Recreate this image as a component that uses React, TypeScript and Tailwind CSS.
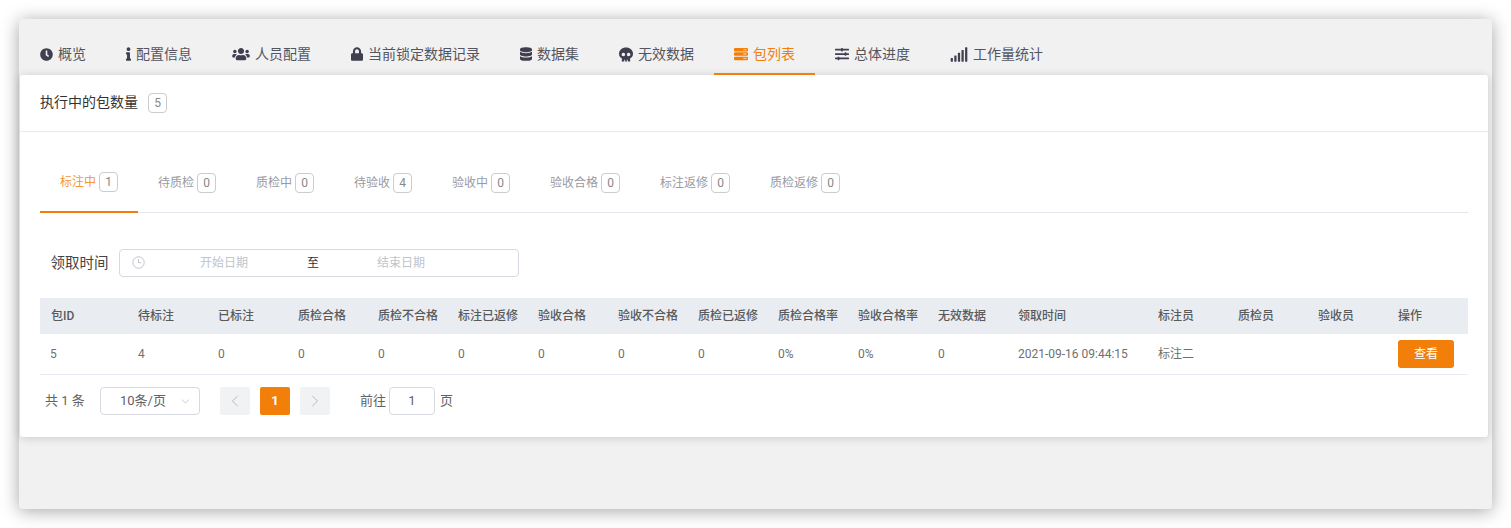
import React from "react";
import { FaClock, FaInfo, FaUsers, FaLock, FaDatabase, FaSkull, FaServer, FaSlidersH, FaSignal } from "react-icons/fa";
import { ChevronDown, ChevronLeft, ChevronRight } from "lucide-react";

const font = { fontFamily: 'Roboto, "Noto Sans CJK SC", sans-serif' };

const topTabs = [
  { label: "概览", icon: <FaClock className="h-[13px] w-[13px]" /> },
  { label: "配置信息", icon: <FaInfo className="h-[14px] w-[5px]" /> },
  { label: "人员配置", icon: <FaUsers className="h-[14px] w-[18px]" /> },
  { label: "当前锁定数据记录", icon: <FaLock className="h-[14px] w-[12px]" /> },
  { label: "数据集", icon: <FaDatabase className="h-[14px] w-[12px]" /> },
  { label: "无效数据", icon: <FaSkull className="h-[15px] w-[14px]" /> },
  { label: "包列表", icon: <FaServer className="h-[14px] w-[14px]" />, active: true },
  { label: "总体进度", icon: <FaSlidersH className="h-[14px] w-[14px]" /> },
  { label: "工作量统计", icon: <FaSignal className="h-[15px] w-[18px]" /> },
];

const subTabs = [
  ["标注中", "1"],
  ["待质检", "0"],
  ["质检中", "0"],
  ["待验收", "4"],
  ["验收中", "0"],
  ["验收合格", "0"],
  ["标注返修", "0"],
  ["质检返修", "0"],
];

const headers = ["包ID", "待标注", "已标注", "质检合格", "质检不合格", "标注已返修", "验收合格", "验收不合格", "质检已返修", "质检合格率", "验收合格率", "无效数据", "领取时间", "标注员", "质检员", "验收员", "操作"];
const row = ["5", "4", "0", "0", "0", "0", "0", "0", "0", "0%", "0%", "0", "2021-09-16 09:44:15", "标注二", "", ""];

export default function App() {
  return (
    <div className="min-h-[528px] bg-white pt-[19px] pl-[19px] pr-[19px]" style={font}>
      <div className="h-[490px] w-[1473px] rounded-[4px] bg-[#f1f1f1] pl-px shadow-[0_2px_18px_rgba(0,0,0,0.36)]">
        <div className="flex h-[56px] items-end">
          {topTabs.map((t) => (
            <div
              key={t.label}
              className={`flex h-[40px] items-center gap-[5px] border-b-2 px-[20px] text-[14px] ${t.active ? "border-[#f17f0a] text-[#f17f0a]" : "border-transparent text-[#55555f]"}`}
            >
              <span className={t.active ? "text-[#f17f0a]" : "text-[#3f3f50]"}>{t.icon}</span>
              <span>{t.label}</span>
            </div>
          ))}
        </div>
        <div className="h-[362px] w-[1468px] rounded-[3px] bg-white shadow-[0_1px_10px_rgba(0,0,0,0.16)]">
          <div className="flex h-[57px] items-center gap-[10px] border-b border-[#e8eaf0] pl-[20px]">
            <span className="pb-[2px] text-[14px] text-[#333333]">执行中的包数量</span>
            <span className="flex h-[20px] w-[19px] items-center justify-center rounded-[4px] border border-[#cccccc] text-[12px] text-[#888888]">5</span>
          </div>
          <div className="px-[20px]">
            <div className="flex h-[81px] border-b border-[#e4e7ed]">
              {subTabs.map(([label, n], i) => (
                <div
                  key={label}
                  className={`-mb-px flex items-center gap-[3px] px-[20px] pt-[21px] text-[12px] ${i === 0 ? "border-b-2 border-[#f17f0a] text-[#f5953a]" : "text-[#9a9aa3]"}`}
                >
                  <span>{label}</span>
                  <span className="flex h-[20px] w-[19px] items-center justify-center rounded-[4px] border border-[#cccccc] text-[12px] text-[#888888]">{n}</span>
                </div>
              ))}
            </div>
            <div className="flex h-[85px] items-center pt-[15px] pl-[10.5px]">
              <span className="w-[68.5px] pt-px text-[14.5px] text-[#444444]">领取时间</span>
              <div className="flex h-[28px] w-[400px] items-center rounded-[4px] border border-[#d6d9e2] pl-[12px] text-[12px] text-[#c0c4cc]">
                <svg className="-mt-px" width="13" height="13" viewBox="0 0 13 13" fill="none" stroke="#c0c4cc" strokeWidth="1">
                  <circle cx="6.5" cy="6.5" r="5.7" />
                  <path d="M6.5 3v3.7h2.8" />
                </svg>
                <span className="ml-[55px]">开始日期</span>
                <span className="ml-[59px] text-[#333333]">至</span>
                <span className="ml-[58px]">结束日期</span>
              </div>
            </div>
            <div className="grid grid-cols-[88px_repeat(11,80px)_140px_repeat(4,80px)]">
              {headers.map((h) => (
                <div key={h} className="flex h-[36px] items-center bg-[#e9edf2] pl-[10px] text-[12px] font-medium text-[#5a5a5a] first:pl-[11px]">
                  {h}
                </div>
              ))}
              {row.map((c, i) => (
                <div key={i} className="flex h-[41px] items-center border-b border-[#e6ebf3] pl-[10px] text-[12px] text-[#707070] first:pl-[11px]">
                  {c}
                </div>
              ))}
              <div className="flex h-[41px] items-center border-b border-[#e6ebf3] pl-[10px]">
                <button className="h-[28px] w-[56px] rounded-[3px] bg-[#f17f0a] text-[12px] text-white">查看</button>
              </div>
            </div>
            <div className="flex items-center pt-[12px] pl-[5px] text-[13px] text-[#606266]">
              <span className="w-[55px]">共 1 条</span>
              <div className="flex h-[28px] w-[100px] items-center justify-between rounded-[4px] border border-[#d6d9e2] pl-[19px] pr-[7px]">
                <span>10条/页</span>
                <ChevronDown size={13} strokeWidth={1} className="text-[#9aa0a8]" />
              </div>
              <div className="ml-[20px] flex h-[28px] w-[30px] items-center justify-center rounded-[2px] bg-[#f1f2f3] text-[#a8acb4]">
                <ChevronLeft size={20} strokeWidth={1} />
              </div>
              <div className="ml-[10px] flex h-[28px] w-[30px] items-center justify-center rounded-[2px] bg-[#f17f0a] font-bold text-white">1</div>
              <div className="ml-[10px] flex h-[28px] w-[30px] items-center justify-center rounded-[2px] bg-[#f1f2f3] text-[#a8acb4]">
                <ChevronRight size={20} strokeWidth={1} />
              </div>
              <span className="ml-[30px]">前往</span>
              <div className="ml-[3px] flex h-[28px] w-[46px] items-center justify-center rounded-[4px] border border-[#d6d9e2]">1</div>
              <span className="ml-[5px]">页</span>
            </div>
          </div>
        </div>
      </div>
    </div>
  );
}
